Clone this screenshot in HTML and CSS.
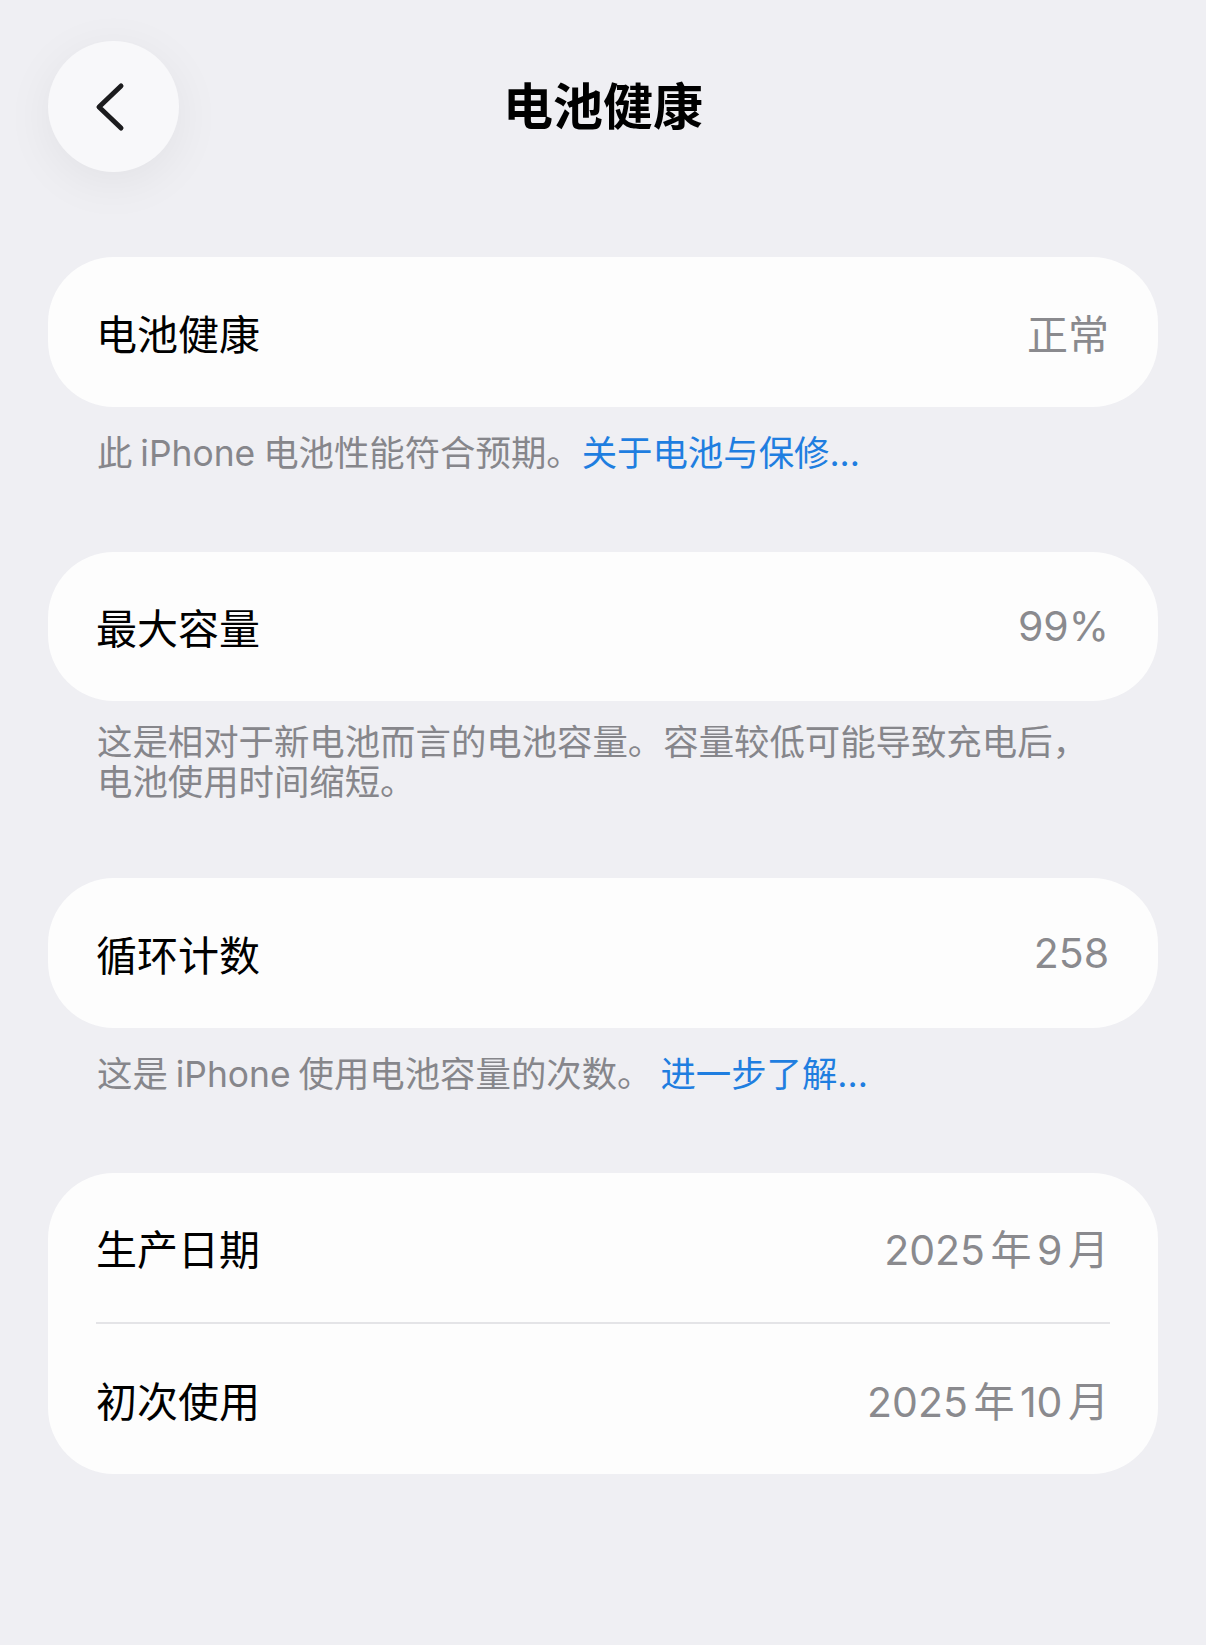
FILE: index.html
```html
<!DOCTYPE html>
<html lang="zh-CN">
<head>
    <meta charset="UTF-8">
    <meta name="viewport" content="width=device-width, initial-scale=1.0">
    <title>电池健康</title>
    <link rel="stylesheet" href="styles.css">
</head>
<body>
    <header class="nav">
        <a class="back" href="#" aria-label="返回">
            <svg width="34" height="50" viewBox="0 0 34 50">
                <path d="M28 4 L6 25 L28 46" fill="none" stroke="#1c1c1e" stroke-width="5" stroke-linecap="round" stroke-linejoin="round"/>
            </svg>
        </a>
        <h1 class="title">电池健康</h1>
        <span></span>
    </header>

    <main class="content">
        <section class="group">
            <div class="card">
                <div class="row">
                    <span class="label">电池健康</span>
                    <span class="value">正常</span>
                </div>
            </div>
            <p class="note">此 iPhone 电池性能符合预期。<a href="#">关于电池与保修...</a></p>
        </section>

        <section class="group tight">
            <div class="card">
                <div class="row">
                    <span class="label">最大容量</span>
                    <span class="value">99%</span>
                </div>
            </div>
            <p class="note">这是相对于新电池而言的电池容量。容量较低可能导致充电后，电池使用时间缩短。</p>
        </section>

        <section class="group">
            <div class="card">
                <div class="row">
                    <span class="label">循环计数</span>
                    <span class="value">258</span>
                </div>
            </div>
            <p class="note">这是 iPhone 使用电池容量的次数。 <a href="#">进一步了解...</a></p>
        </section>

        <section class="group">
            <div class="card">
                <div class="row">
                    <span class="label">生产日期</span>
                    <span class="value">2025 年 9 月</span>
                </div>
                <div class="divider"></div>
                <div class="row">
                    <span class="label">初次使用</span>
                    <span class="value">2025 年 10 月</span>
                </div>
            </div>
        </section>
    </main>
</body>
</html>
```

FILE: styles.css
```css
body {
    margin: 0;
    background-color: #efeff3;
    font-family: "Inter", "Noto Sans CJK SC", sans-serif;
    color: #000;
}
.nav {
    display: grid;
    grid-template-columns: 131px 1fr 131px;
    align-items: center;
    padding: 41px 48px 0;
}
.back {
    width: 131px;
    height: 131px;
    border-radius: 50%;
    background-color: #f8f8fa;
    box-shadow: 0 10px 50px rgba(0, 0, 0, 0.06);
    display: flex;
    align-items: center;
    justify-content: center;
}
.back svg {
    margin-left: -7px;
}
.title {
    margin: 0;
    text-align: center;
    font-size: 50px;
    font-weight: 700;
    line-height: 1;
}
.content {
    padding: 85px 48px 0;
}
.group {
    margin-bottom: 78px;
}
.group.tight {
    margin-bottom: 75px;
}
.card {
    background-color: #fdfdfd;
    border-radius: 66px;
}
.row {
    height: 149.5px;
    display: flex;
    align-items: center;
    justify-content: space-between;
    padding: 0 49px 0 48px;
    font-size: 41px;
}
.label {
    color: #000;
}
.value {
    color: #8a8a8e;
    word-spacing: -6px;
}
.divider {
    height: 2px;
    background-color: #e4e4e7;
    margin: 0 48px;
}
.note {
    margin: 0;
    padding: 27px 48px 0 49px;
    font-size: 35.4px;
    line-height: 40px;
    color: #86868b;
    word-spacing: -2px;
}
.tight .note {
    padding-top: 22px;
}
.note a {
    color: #1f7ee0;
    text-decoration: none;
}
```
